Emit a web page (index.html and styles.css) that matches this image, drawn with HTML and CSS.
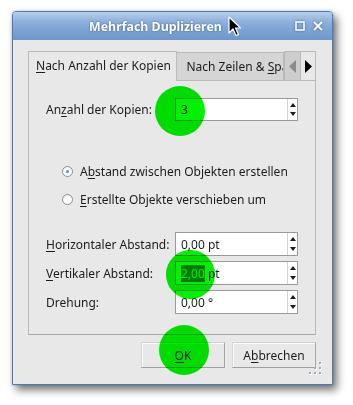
FILE: index.html
```html
<!DOCTYPE html>
<html>
<head>
    <title>Mehrfach Duplizieren</title>
    <meta charset="utf-8" />
    <link rel="stylesheet" href="styles.css">
</head>
<body>
    <div class="window">
        <div class="titlebar">
            <span class="title">Mehrfach Duplizieren</span>
            <svg class="wbtn" width="10" height="10" viewBox="0 0 10 10">
                <rect x="1" y="1" width="8" height="8" fill="none" stroke="#fff" stroke-width="1.6" />
            </svg>
            <svg class="wbtn" width="10" height="10" viewBox="0 0 10 10">
                <path d="M1 1 L9 9 M9 1 L1 9" stroke="#fff" stroke-width="2" />
            </svg>
        </div>
        <div class="client">
            <div class="tabs">
                <div class="tabbar">
                    <div class="tab active"><u>N</u>ach Anzahl der Kopien</div>
                    <div class="tab"><span>Nach Zeilen &amp; <u>S</u>palten</span></div>
                    <div class="scroll off">
                        <svg width="8" height="13" viewBox="0 0 8 13"><path d="M7 0 L0 6.5 L7 13 Z" fill="#8a8a8a" /></svg>
                    </div>
                    <div class="scroll">
                        <svg width="8" height="13" viewBox="0 0 8 13"><path d="M1 0 L8 6.5 L1 13 Z" fill="#000" /></svg>
                    </div>
                </div>
                <div class="pane">
                    <div class="row first">
                        <label>An<u>z</u>ahl der Kopien:</label>
                        <div class="spin">
                            <span class="val">3</span>
                            <div class="arrows"><i class="up"></i><i class="down"></i></div>
                        </div>
                    </div>
                    <div class="radios">
                        <div class="radio checked"><span class="dot"></span>A<u>b</u>stand zwischen Objekten erstellen</div>
                        <div class="radio"><span class="dot"></span><u>E</u>rstellte Objekte verschieben um</div>
                    </div>
                    <div class="fields">
                        <div class="row">
                            <label><u>H</u>orizontaler Abstand:</label>
                            <div class="spin">
                                <span class="val">0,00 pt</span>
                                <div class="arrows"><i class="up"></i><i class="down"></i></div>
                            </div>
                        </div>
                        <div class="row">
                            <label><u>V</u>ertikaler Abstand:</label>
                            <div class="spin">
                                <span class="val"><span class="sel">2,00</span> pt</span>
                                <div class="arrows"><i class="up"></i><i class="down"></i></div>
                            </div>
                        </div>
                        <div class="row">
                            <label>Drehung:</label>
                            <div class="spin">
                                <span class="val">0,00 °</span>
                                <div class="arrows"><i class="up"></i><i class="down"></i></div>
                            </div>
                        </div>
                    </div>
                </div>
            </div>
            <div class="buttons">
                <button class="btn"><u>O</u>K</button>
                <button class="btn">A<u>b</u>brechen</button>
            </div>
            <svg class="grip" width="13" height="13" viewBox="0 0 13 13">
                <g fill="#fff">
                    <rect x="11" y="1" width="2" height="2" />
                    <rect x="6" y="6" width="2" height="2" /><rect x="11" y="6" width="2" height="2" />
                    <rect x="1" y="11" width="2" height="2" /><rect x="6" y="11" width="2" height="2" /><rect x="11" y="11" width="2" height="2" />
                </g>
                <g fill="#a8a8a8">
                    <rect x="10" y="0" width="2" height="2" />
                    <rect x="5" y="5" width="2" height="2" /><rect x="10" y="5" width="2" height="2" />
                    <rect x="0" y="10" width="2" height="2" /><rect x="5" y="10" width="2" height="2" /><rect x="10" y="10" width="2" height="2" />
                </g>
            </svg>
        </div>
    </div>

    <div class="spot spot-count"></div>
    <div class="spot spot-vertical"></div>
    <div class="spot spot-ok"></div>

    <svg class="cursor" width="14" height="21" viewBox="0 0 14 21">
        <path d="M1 1 L1 17 L5 13 L8 19.5 L10.5 18.5 L7.5 12 L12.5 12 Z" fill="#000" stroke="#fff" stroke-width="1.2" stroke-linejoin="round" />
    </svg>
</body>
</html>
```

FILE: styles.css
```css
body {
    margin: 0;
    padding: 11px 0 0 12px;
    width: 353px;
    height: 405px;
    box-sizing: border-box;
    background: #ffffff;
    font-family: "Noto Sans", "Open Sans", sans-serif;
    font-size: 12px;
    color: #1c1c1c;
    position: relative;
    overflow: hidden;
}

u {
    text-decoration-thickness: 1px;
    text-underline-offset: 2px;
}

.window {
    width: 321px;
    height: 374px;
    box-sizing: border-box;
    border: 1px solid #4d7cb9;
    border-radius: 4px 4px 0 0;
    background: #e8e8e8;
    box-shadow: 4px 5px 9px rgba(0, 0, 0, 0.55), 0 0 3px rgba(0, 0, 0, 0.2);
    display: flex;
    flex-direction: column;
}

.titlebar {
    height: 28px;
    display: flex;
    align-items: center;
    border-radius: 3px 3px 0 0;
    background: linear-gradient(#b7cfea, #8db0dc 35%, #7aa1d2 70%, #6e97ca);
    padding-right: 9px;
}

.title {
    margin-left: 76px;
    flex: 1;
    color: #ffffff;
    font-weight: bold;
    font-size: 12.4px;
    text-shadow: 0 0 2px rgba(20, 40, 80, 0.7);
}

.wbtn {
    margin-left: 8px;
    filter: drop-shadow(0 0 1px rgba(20, 40, 80, 0.6));
}

.client {
    flex: 1;
    padding: 11px 16px 0 15px;
    position: relative;
}

.tabbar {
    height: 29px;
    display: flex;
    align-items: flex-end;
}

.tab {
    height: 28px;
    box-sizing: border-box;
    line-height: 27px;
    background: #d5d5d5;
    border-top: 1px solid #b9b9b9;
    border-right: 1px solid #b9b9b9;
    padding-left: 9px;
    width: 107px;
    overflow: hidden;
    white-space: nowrap;
}

.tab.active {
    width: 150px;
    height: 30px;
    margin-bottom: -1px;
    position: relative;
    z-index: 1;
    background: #e8e8e8;
    border-left: 1px solid #b9b9b9;
    padding-left: 7px;
    line-height: 28px;
}

.scroll {
    width: 16px;
    height: 29px;
    box-sizing: border-box;
    border: 1px solid #b9b9b9;
    border-bottom: none;
    background: #e8e8e8;
    display: flex;
    align-items: center;
    justify-content: center;
}

.scroll.off {
    background: #cdcdcd;
    border-right: none;
}

.pane {
    height: 255px;
    box-sizing: border-box;
    border: 1px solid #b9b9b9;
    border-bottom-color: #a6a6a6;
    padding: 17px 17px 0 17px;
}

.row {
    display: flex;
    align-items: center;
}

.row label {
    width: 129px;
}

.spin {
    width: 123px;
    height: 24px;
    box-sizing: border-box;
    border: 1px solid #9a9a9a;
    background: #ffffff;
    display: flex;
    align-items: center;
}

.first .spin {
    height: 23px;
}

.val {
    flex: 1;
    padding-left: 5px;
}

.sel {
    background: #4a7fc4;
    color: #ffffff;
}

.arrows {
    width: 9px;
    align-self: stretch;
    border-left: 1px solid #d2d2d2;
    display: flex;
    flex-direction: column;
    justify-content: space-between;
    align-items: center;
    padding: 4px 0;
}

.arrows i {
    width: 0;
    height: 0;
    border-left: 3px solid transparent;
    border-right: 3px solid transparent;
}

.arrows .up {
    border-bottom: 4px solid #1c1c1c;
}

.arrows .down {
    border-top: 4px solid #1c1c1c;
}

.radios {
    padding: 42px 0 0 16px;
    display: flex;
    flex-direction: column;
    gap: 11px;
}

.radio {
    height: 17px;
    display: flex;
    align-items: center;
}

.dot {
    width: 11px;
    height: 11px;
    box-sizing: border-box;
    border: 1px solid #8d8d8d;
    border-radius: 50%;
    background: linear-gradient(#f2f2f2, #ffffff);
    margin-right: 7px;
    display: flex;
    align-items: center;
    justify-content: center;
}

.radio.checked .dot::after {
    content: "";
    width: 3px;
    height: 3px;
    border-radius: 50%;
    background: #5b8fd4;
}

.fields {
    padding-top: 24px;
    display: flex;
    flex-direction: column;
    gap: 5px;
}

.buttons {
    display: flex;
    justify-content: flex-end;
    gap: 7px;
    margin-top: 7px;
}

.btn {
    width: 84px;
    height: 26px;
    font: inherit;
    color: inherit;
    background: #e8e8e8;
    border: 1px solid;
    border-color: #d0d0d0 #a6a6a6 #a0a0a0 #d6d6d6;
    box-shadow: inset 1px 1px 0 #fbfbfb;
    padding: 0;
}

.grip {
    position: absolute;
    right: 10px;
    bottom: 9px;
}

.spot {
    position: absolute;
    width: 50px;
    height: 50px;
    border-radius: 50%;
    background: #00f200;
    mix-blend-mode: multiply;
    filter: blur(0.6px);
}

.spot-count {
    left: 155px;
    top: 86px;
}

.spot-vertical {
    left: 166px;
    top: 250px;
    width: 49px;
    height: 49px;
}

.spot-ok {
    left: 159px;
    top: 325px;
}

.cursor {
    position: absolute;
    left: 228px;
    top: 16px;
}
```
